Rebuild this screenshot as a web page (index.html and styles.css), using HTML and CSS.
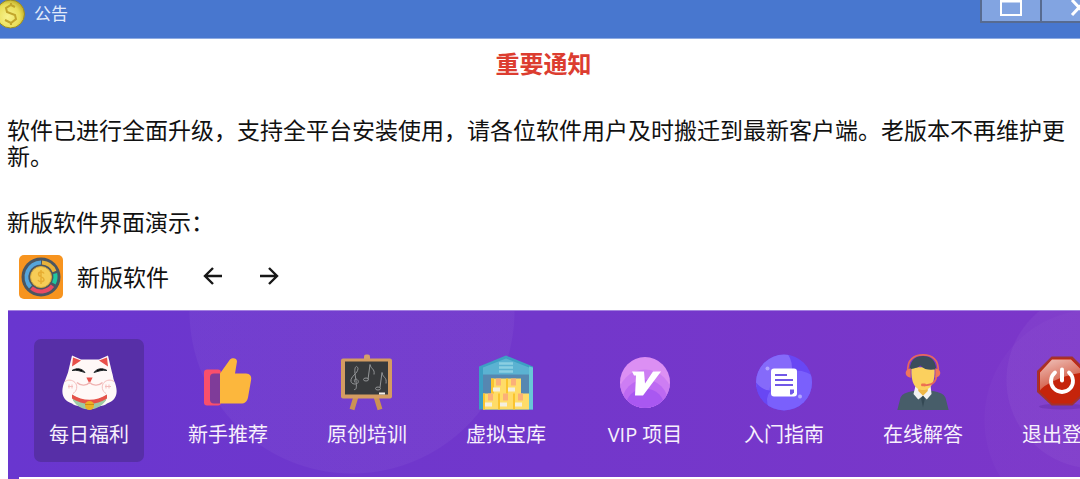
FILE: index.html
```html
<!DOCTYPE html>
<html lang="zh-CN">
<head>
  <meta charset="UTF-8" />
  <meta name="viewport" content="width=device-width, initial-scale=1.0" />
  <title>公告</title>
  <link rel="stylesheet" href="styles.css">
</head>
<body>
  <header class="titlebar">
    <svg class="coin" viewBox="0 0 28 30" aria-hidden="true">
      <defs>
        <radialGradient id="coinFill" cx="40%" cy="60%" r="62%">
          <stop offset="0" stop-color="#f8f28c" />
          <stop offset="0.7" stop-color="#e9de58" />
          <stop offset="1" stop-color="#c3b02d" />
        </radialGradient>
      </defs>
      <circle cx="10.5" cy="14" r="14" fill="url(#coinFill)" stroke="#9a8c22" />
      <path d="M15 7l-4-2-5 3 1 4 8 3 1 4-5 4-6-3M11 3v3M11 22v3" fill="none" stroke="#c2a52b" stroke-width="2" />
    </svg>
    <span class="titlebar-text">公告</span>
    <div class="window-controls">
      <button class="window-btn" aria-label="最大化">
        <svg width="22" height="18" viewBox="0 0 22 18"><path d="M1 0h20v15H1z" fill="none" stroke="#fff" stroke-width="2" /><path d="M1 1h20" stroke="#fff" stroke-width="3" /></svg>
      </button>
      <button class="window-btn" aria-label="关闭">
        <svg width="18" height="18" viewBox="0 0 18 18"><path d="M2 0l14 15M16 0L2 15" stroke="#fff" stroke-width="3" /></svg>
      </button>
    </div>
  </header>

  <main>
    <section class="notice">
      <h1>重要通知</h1>
      <p>软件已进行全面升级，支持全平台安装使用，请各位软件用户及时搬迁到最新客户端。老版本不再维护更新。</p>
      <p>新版软件界面演示：</p>
    </section>

    <section class="demo">
      <div class="demo-bar">
        <svg class="demo-logo" viewBox="0 0 44 44" aria-hidden="true">
          <rect width="44" height="44" rx="5" fill="#f7941f" />
          <circle cx="22" cy="22" r="19.5" fill="#4b5661" />
          <g fill="none" stroke-width="4">
            <path d="M11.5 32A14.5 14.5 0 0 1 22 7.5" stroke="#55a5dc" />
            <path d="M23 7.5A14.5 14.5 0 0 1 35.5 16.5" stroke="#e7b23b" />
            <path d="M36.2 18.5A14.5 14.5 0 0 1 34.8 28.5" stroke="#1fc8a0" />
            <path d="M33.5 30.8A14.5 14.5 0 0 1 12.5 33" stroke="#e94b64" />
          </g>
          <circle cx="22" cy="22" r="10.5" fill="#f6cd57" stroke="#d9ab3c" />
          <path d="M25 18.5c-1-2-5.5-2-5.5.8 0 3.2 5.5 2 5.5 5.2 0 2.8-5 2.8-6 .5M22 15v14" fill="none" stroke="#e7ad32" stroke-width="1.5" />
        </svg>
        <span class="demo-name">新版软件</span>
        <button class="arrow-btn" aria-label="后退">
          <svg width="20" height="20" viewBox="0 0 20 20"><path d="M19 10H3M10 2L2 10l8 8" /></svg>
        </button>
        <button class="arrow-btn" aria-label="前进">
          <svg width="20" height="20" viewBox="0 0 20 20"><path d="M1 10h16M10 2l8 8-8 8" /></svg>
        </button>
      </div>

      <div class="banner">
        <nav class="menu">
          <button class="menu-item active">
            <!-- lucky cat -->
            <svg viewBox="0 0 56 56" aria-hidden="true">
              <path d="M11 1l9 4h18l9-4 4 17c1 3 1 5 2 8 5 11 3 20-7 23-6 5-29 5-35 0C1 46-1 37 4 26c1-3 2-5 3-8z" fill="#fff8f7" />
              <path d="M12 3l8 3-9 6zM46 3l-8 3 9 6z" fill="#e8504b" />
              <path d="M11 16c5-3 10-2 13 2-4-1-8-3-13-2zM46 16c-5-3-10-2-13 2 4-1 8-3 13-2z" stroke="#262c2f" stroke-width="1" />
              <path d="M27 24h3l-1.5 3z" fill="#e84f4a" stroke="#e84f4a" stroke-width="2" />
              <path d="M16 28c4 4 10 3 12.5 0 3 3 9 4 13 0" fill="none" stroke="#efb3b2" stroke-width="1.3" />
              <g fill="none" stroke="#f4bdbb" stroke-width="1">
                <path d="M4 27c3-2 7-2 10 1s2 9-2 11M53 27c-3-2-7-2-10 1s-2 9 2 11" />
                <path d="M7 32h5M44 32h6M8 30v4M11 30v4M45 30v4M48 30v4" />
              </g>
              <path d="M11 40c11 8 24 8 35 0l-1 6c-9 12-25 12-33 0z" fill="#9dc9a5" />
              <path d="M11 40c11 7 24 7 35 0v4c-11 7-24 7-35 0z" fill="#e65149" />
              <circle cx="28.5" cy="51" r="4.5" fill="#edb125" />
              <path d="M24 50h9" stroke="#c98c17" />
            </svg>
            <span>每日福利</span>
          </button>
          <button class="menu-item">
            <!-- thumbs up -->
            <svg viewBox="0 0 56 56" aria-hidden="true">
              <rect x="4" y="15" width="17" height="36" rx="3" fill="#f94f6c" />
              <rect x="10" y="19" width="13" height="30" rx="4" fill="#7f3c99" />
              <path d="M20 19l10-14c2-2 7-2 7 2l-2 12h11c4 0 6 3 5 7l-3 17c-1 4-3 6-7 6H20z" fill="#fcb73d" />
            </svg>
            <span>新手推荐</span>
          </button>
          <button class="menu-item">
            <!-- blackboard -->
            <svg viewBox="0 0 56 56" aria-hidden="true">
              <path d="M17 42l-4 13M37 42l4 13" stroke="#cc9254" stroke-width="5" />
              <rect x="25" y="0" width="6" height="6" rx="2" fill="#d5a06b" />
              <rect x="2" y="4" width="51" height="40" rx="2" fill="#d49c61" />
              <rect x="6" y="7" width="43" height="33" fill="#383a3c" />
              <g fill="none" stroke="#949698" stroke-width="1">
                <path d="M15 35c4 1 2-8 1-16-1-7 2-9 3-5 0 5-8 8-7 13 1 4 9 3 7-1-2-3-5-1-3 2" />
                <path d="M29 25l2-15c1 5 5 4 4 10M41 33l2-15c1 6 5 4 4 11" />
                <ellipse cx="27" cy="25" rx="2.5" ry="1.5" /><ellipse cx="39" cy="34" rx="2.5" ry="1.5" />
              </g>
              <path d="M40 39h6" stroke="#f5eee7" stroke-width="2" />
            </svg>
            <span>原创培训</span>
          </button>
          <button class="menu-item">
            <!-- warehouse -->
            <svg viewBox="0 0 56 56" aria-hidden="true">
              <path d="M1 12L28 1l27 11v43H1z" fill="#3d9fc3" />
              <path d="M5 13L28 4l23 9v42H5z" fill="#5bb2d2" />
              <path d="M51 12l4 1v42h-4z" fill="#68c6d7" />
              <path d="M5 20h46v35H5z" fill="#5687b1" />
              <path d="M21 9h14M21 13h14M21 17h14" stroke="#8bcfe2" stroke-width="2.5" />
              <path d="M13 24h30v15h8v16H5V39h8z" fill="#ffdc68" />
              <path d="M13 24h3v15h-3zM28 24h2v15h-2zM5 39h2v16H5zM20 39h2v16h-2zM35 39h2v16h-2z" fill="#fac42f" />
              <path d="M18 24h5v7h-5zM33 24h5v7h-5zM10 39h5v7h-5zM25 39h5v7h-5zM40 39h5v7h-5z" fill="#fbb078" />
              <path d="M15 33h7v4h-7zM30 33h7v4h-7zM7 48h7v4H7zM22 48h7v4h-7zM37 48h7v4h-7z" fill="#f3efdf" />
            </svg>
            <span>虚拟宝库</span>
          </button>
          <button class="menu-item">
            <!-- vip badge -->
            <svg viewBox="0 0 56 56" aria-hidden="true">
              <defs>
                <clipPath id="vipClip"><ellipse cx="28" cy="28" rx="25" ry="25.5" /></clipPath>
              </defs>
              <g clip-path="url(#vipClip)">
                <path d="M0 0h56v56H0z" fill="#dc8ff3" />
                <circle cx="28" cy="42" r="27" fill="#cd7df3" />
                <circle cx="28" cy="48" r="23" fill="#bd69f2" />
                <circle cx="28" cy="54" r="20" fill="#a958f1" />
              </g>
              <path d="M15 17h12l1 12 8-12h8L26 41h-8l1-20h-2z" fill="#fff" />
            </svg>
            <span>VIP 项目</span>
          </button>
          <button class="menu-item">
            <!-- guide document -->
            <svg viewBox="0 0 56 56" aria-hidden="true">
              <defs>
                <clipPath id="guideClip"><circle cx="28" cy="28" r="28" /></clipPath>
              </defs>
              <g clip-path="url(#guideClip)">
                <path d="M0 0h56v56H0z" fill="#6847f4" />
                <circle cx="13" cy="13" r="23" fill="#856afa" />
                <circle cx="40" cy="45" r="29" fill="#7a60fc" />
                <path d="M0 28c4 5 9 8 15 8-5 5-5 12-3 20H0z" fill="#6847f4" />
              </g>
              <rect x="15" y="14" width="26" height="28" rx="3" fill="#fff" />
              <path d="M19 20.5h12M19 25.5h18M19 30.5h18" stroke="#7158e7" stroke-width="2" />
              <path d="M34 35h4v3l-2 2h-2z" fill="#7158e7" />
              <circle cx="11.5" cy="14" r="2" fill="#b3a4ff" /><circle cx="44" cy="42" r="2" fill="#b3a4ff" />
            </svg>
            <span>入门指南</span>
          </button>
          <button class="menu-item">
            <!-- support agent -->
            <svg viewBox="0 0 56 60" aria-hidden="true">
              <path d="M1 59l3-12c1-4 5-6 9-7l9-2h12l9 2c4 1 8 3 9 7l3 12z" fill="#475d69" />
              <path d="M20 34h16l1 8-5 6-4-4-5 4-5-6z" fill="#f1f1f1" />
              <path d="M23 32h10v7l-5 5-5-5z" fill="#eeb746" />
              <path d="M16 14h24c1 13-2 24-12 24S15 27 16 14z" fill="#fbd05e" />
              <path d="M14 16C15 5 21 2 28 2s13 3 14 14c-6 1-12 1-17-4-3 3-7 3-11 4z" fill="#3b4d5b" />
              <path d="M12 19C11 5 19 1 28 1s17 4 16 18M42 23c0 7-5 10-13 10" fill="none" stroke="#e7675c" stroke-width="1.8" />
              <path d="M15 15v10c-7-1-7-9 0-10zM41 15v10c7-1 7-9 0-10z" fill="#ef755b" />
              <rect x="26" y="31" width="5" height="3" rx="1" fill="#ee704f" />
              <path d="M28 44l2 3-2 9-2-9z" fill="#344954" />
            </svg>
            <span>在线解答</span>
          </button>
          <button class="menu-item">
            <!-- power -->
            <svg viewBox="0 0 56 56" aria-hidden="true">
              <defs>
                <linearGradient id="powerShine" x1="0" y1="0" x2="0.5" y2="1">
                  <stop offset="0" stop-color="#f0c4bd" />
                  <stop offset="1" stop-color="#ce4a31" />
                </linearGradient>
              </defs>
              <ellipse cx="28" cy="52" rx="23" ry="3" fill="#5f28a4" opacity="0.4" />
              <path d="M18 3h20l14 14v20L38 50H18L4 37V17z" fill="#c5240b" stroke="#a1332f" stroke-width="2" />
              <path d="M18 5h19l13 13C36 19 13 27 6 36V18z" fill="url(#powerShine)" />
              <path d="M21 18a11 11 0 1 0 14 0" fill="none" stroke="#fff" stroke-width="3.8" stroke-linecap="round" />
              <path d="M28 15v11" stroke="#fff" stroke-width="4" stroke-linecap="round" />
            </svg>
            <span>退出登录</span>
          </button>
        </nav>
        <div class="panel"></div>
      </div>
    </section>
  </main>
</body>
</html>
```
FILE: styles.css
```css
* {
  box-sizing: border-box;
}

body {
  margin: 0;
  background: #fff;
  color: #111;
  font-family: "Noto Sans CJK SC", sans-serif;
  overflow: hidden;
}

button {
  border: none;
  background: none;
  padding: 0;
  color: inherit;
  font-family: inherit;
  cursor: pointer;
}

svg {
  display: block;
  flex-shrink: 0;
}

/* title bar */
.titlebar {
  display: flex;
  align-items: flex-start;
  height: 39px;
  background: #4877cf;
  border-bottom: 1px solid #8eabe2;
  color: #e3ebfa;
}

.coin {
  width: 28px;
  height: 30px;
}

.titlebar-text {
  margin-left: 6px;
  font-size: 17px;
  line-height: 26px;
}

.window-controls {
  display: flex;
  margin-left: auto;
  margin-right: -22px;
  border-left: 2px solid #576b91;
}

.window-btn {
  display: flex;
  justify-content: center;
  width: 60px;
  height: 23px;
  background: #82a4e1;
  border-right: 2px solid #576b91;
  border-bottom: 2px solid #576b91;
}

.window-btn:last-child {
  padding-left: 16px;
}

/* notice text */
.notice {
  padding: 11px 0 0 7px;
}

.notice h1 {
  margin: 0 0 40px;
  color: #dc3d30;
  font-size: 24px;
  line-height: 26px;
  text-align: center;
}

.notice p {
  margin: 0 0 40px;
  font-size: 23px;
  line-height: 26px;
}

.notice p:last-child {
  margin-bottom: 0;
}

/* demo */
.demo {
  padding: 21px 0 0 8px;
}

.demo-bar {
  display: flex;
  align-items: center;
  padding: 0 11px 11px;
}

.demo-logo {
  width: 44px;
  height: 44px;
}

.demo-name {
  margin: 0 34px 2px 14px;
  font-size: 23px;
  line-height: 30px;
}

.arrow-btn {
  margin: 0 36px 2px 0;
}

.arrow-btn path {
  fill: none;
  stroke: #171717;
  stroke-width: 2.4;
}

.banner {
  padding-left: 11px;
  border-top: 1px solid #a381df;
  background:
    radial-gradient(circle at 344px 0, rgba(255, 255, 255, 0.04) 162px, transparent 163px),
    radial-gradient(circle at 1087px 69px, rgba(255, 255, 255, 0.04) 88px, transparent 89px),
    radial-gradient(circle at 1087px 109px, rgba(255, 255, 255, 0.02) 110px, transparent 111px),
    linear-gradient(90deg, #6936cf, #7237cb 50%, #7c36c9);
}

.menu {
  display: flex;
  gap: 29px;
  padding: 28px 15px 15px;
}

.menu-item {
  display: flex;
  flex-direction: column;
  align-items: center;
  flex: 0 0 110px;
  gap: 9px;
  padding: 15px 0 12px;
  border-radius: 7px;
  color: #f7f0fc;
  font-family: "Open Sans", "Noto Sans CJK SC", sans-serif;
  font-size: 20px;
  line-height: 30px;
}

.menu-item svg {
  width: 56px;
  height: 57px;
}

.menu-item.active {
  background: #572fa7;
}

.panel {
  height: 20px;
  background: #fff;
}
```
